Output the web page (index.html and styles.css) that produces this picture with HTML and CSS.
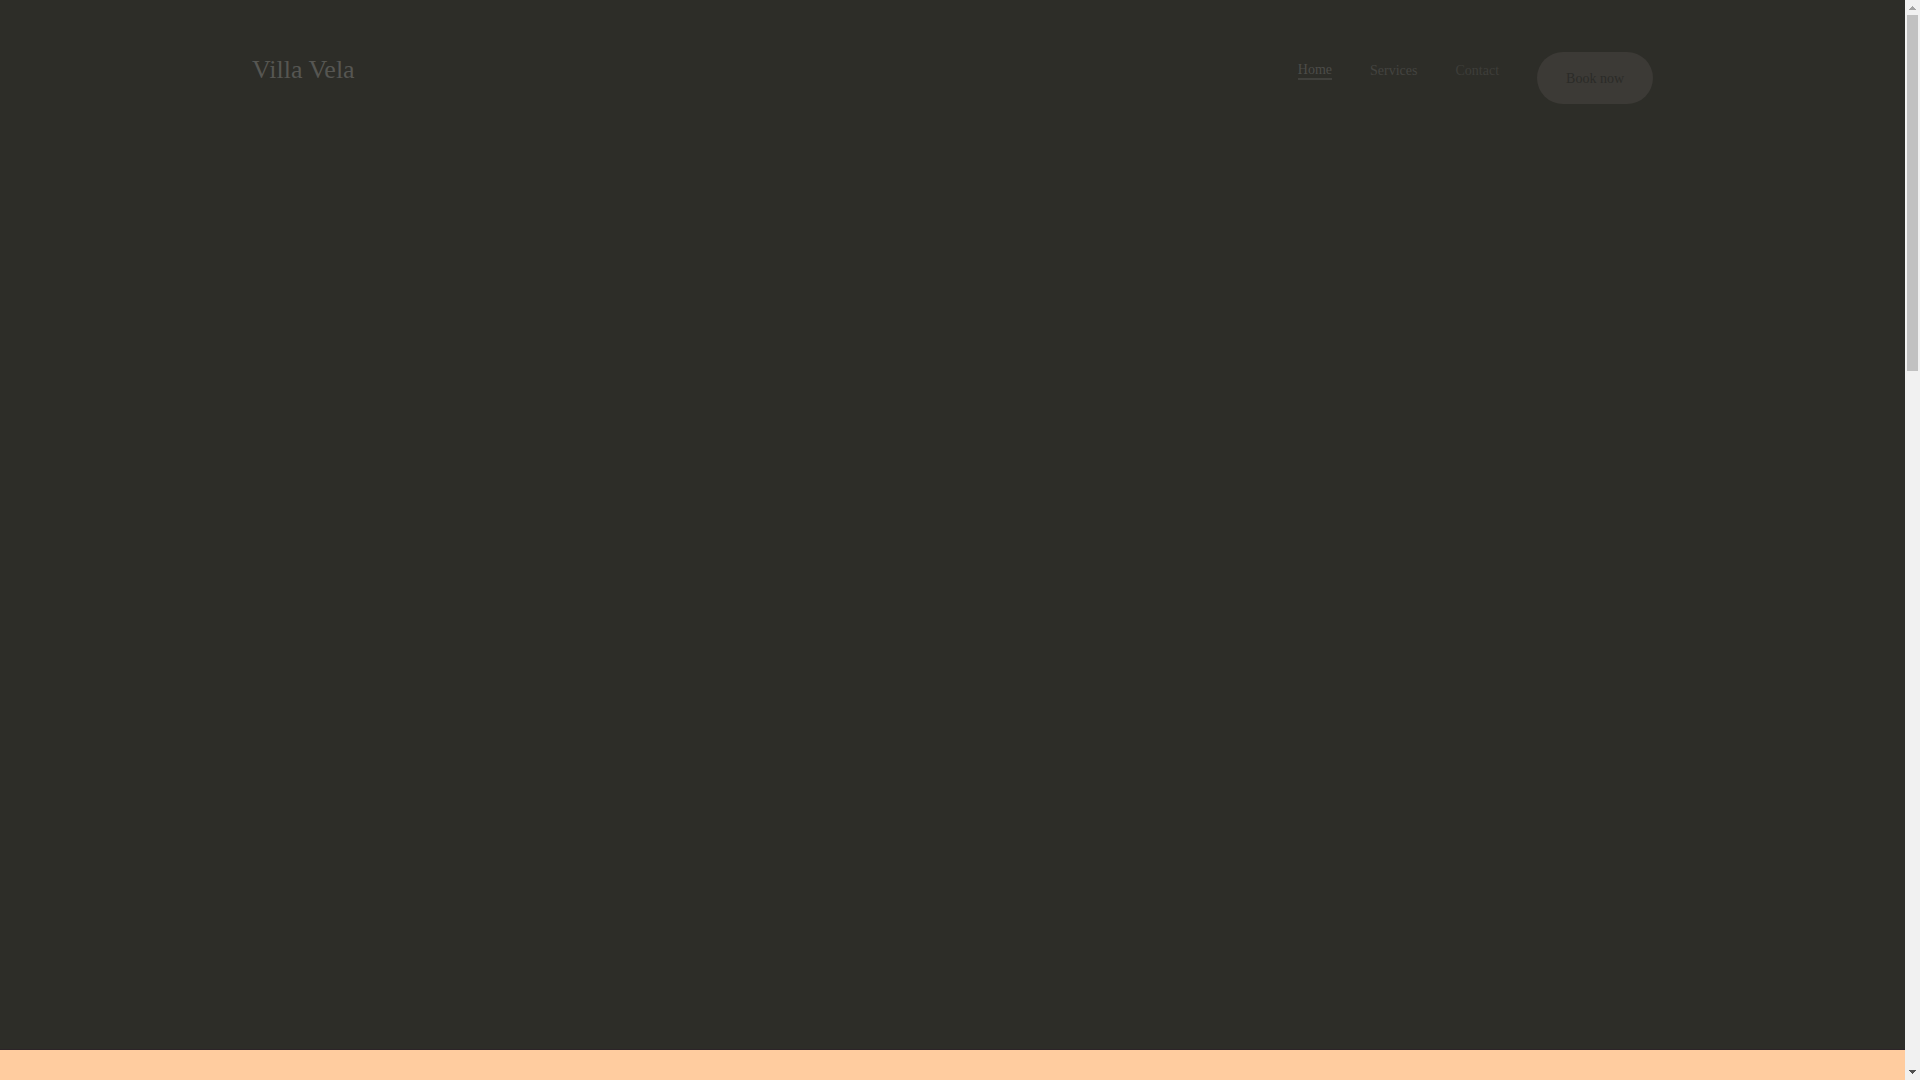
FILE: index.html
```html
<!DOCTYPE html>
<html lang="en">
<head>
	<meta charset="UTF-8">
	<title>Villa Vela</title>
	<link rel="stylesheet" href="styles.css">
</head>
<body>
	<div class="page">
		<div class="hero">
			<header class="header">
				<a class="logo" href="#">Villa Vela</a>
				<nav class="nav">
					<a class="link active" href="#">Home</a>
					<a class="link services" href="#">Services</a>
					<a class="link contact" href="#">Contact</a>
					<button class="book" type="button">Book now</button>
				</nav>
			</header>
		</div>
		<section class="intro"></section>
	</div>
	<div class="scrollbar">
		<svg class="arrow" width="15" height="15" viewBox="0 0 15 15" shape-rendering="crispEdges"><path fill="#a3a3a3" d="M7 6h1v1h1v1h1v1h1v1h-7v-1h1v-1h1v-1h1z"/></svg>
		<div class="thumb"></div>
		<svg class="arrow" width="15" height="15" viewBox="0 0 15 15" shape-rendering="crispEdges"><path fill="#505050" d="M4 5h7v1h-1v1h-1v1h-1v1h-1v-1h-1v-1h-1v-1h-1z"/></svg>
	</div>
</body>
</html>
```
FILE: styles.css
```css
*{
	box-sizing: border-box;
}
body{
	margin: 0;
	display: flex;
	height: 100vh;
	overflow: hidden;
	font-family: "Liberation Serif", "Times New Roman", serif;
}
.page{
	flex: 1;
	display: flex;
	flex-direction: column;
}
.hero{
	flex: 1;
	background: #2d2d28;
	border-bottom: 1px solid #2c2428;
}
.header{
	display: flex;
	justify-content: space-between;
	align-items: flex-start;
	max-width: 1401px;
	margin: 0 auto;
	padding-top: 52px;
}
.logo{
	color: #565652;
	font-size: 26px;
	line-height: 36px;
	text-decoration: none;
}
.nav{
	display: flex;
	align-items: flex-start;
	gap: 38px;
}
.link{
	margin-top: 8px;
	font-size: 14px;
	line-height: 22px;
	text-decoration: none;
}
.active{
	height: 20px;
	color: #4c4c48;
	line-height: 20px;
	border-bottom: 2px solid #40403c;
}
.services{
	color: #444440;
}
.contact{
	color: #3e3e3a;
}
.book{
	height: 52px;
	padding: 2px 29px 0;
	border: none;
	border-radius: 26px;
	background: #3c3a36;
	color: #2b2b28;
	font-family: inherit;
	font-size: 14px;
}
.intro{
	height: 30px;
	background: #ffcc9f;
}
.scrollbar{
	display: flex;
	flex-direction: column;
	width: 15px;
	background: #f1f1f1;
}
.thumb{
	height: 33vh;
	margin: 0 2px auto;
	background: #c1c1c1;
}
.arrow{
	display: block;
}
```
